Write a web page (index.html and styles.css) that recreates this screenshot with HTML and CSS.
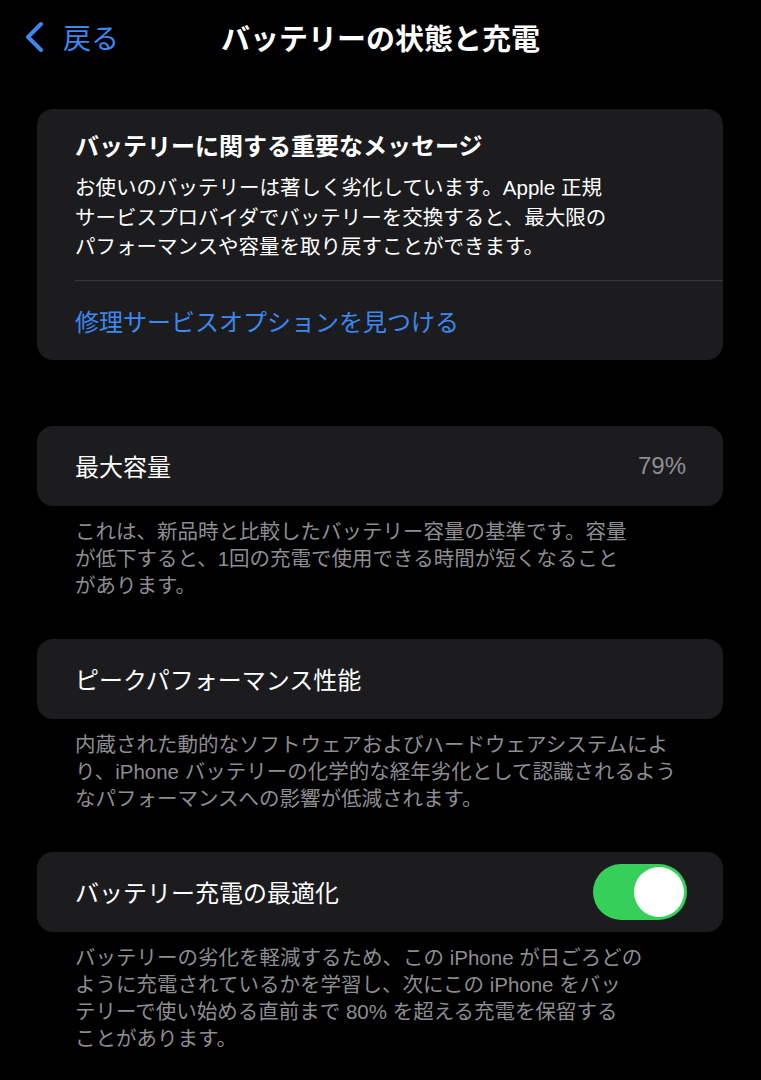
FILE: index.html
```html
<!DOCTYPE html>
<html lang="ja">
<head>
<meta charset="utf-8">
<link rel="stylesheet" href="styles.css">
</head>
<body>
<header class="nav">
  <div class="back">
    <svg class="chev" width="22" height="32" viewBox="0 0 22 32"><path d="M18 3 L5 16 L18 29" fill="none" stroke="#3c87f0" stroke-width="4" stroke-linecap="round" stroke-linejoin="round"/></svg>
    <span class="back-label">戻る</span>
  </div>
  <div class="nav-title">バッテリーの状態と充電</div>
  <div></div>
</header>
<main class="content">
  <section class="card msg">
    <div class="msg-title">バッテリーに関する重要なメッセージ</div>
    <p class="msg-body">お使いのバッテリーは著しく劣化しています。Apple 正規<br>サービスプロバイダでバッテリーを交換すると、最大限の<br>パフォーマンスや容量を取り戻すことができます。</p>
    <div class="sep"></div>
    <div class="link">修理サービスオプションを見つける</div>
  </section>

  <section class="card row first">
    <span class="label">最大容量</span>
    <span class="value">79%</span>
  </section>
  <p class="footer">これは、新品時と比較したバッテリー容量の基準です。容量<br>が低下すると、1回の充電で使用できる時間が短くなること<br>があります。</p>

  <section class="card row">
    <span class="label">ピークパフォーマンス性能</span>
  </section>
  <p class="footer">内蔵された動的なソフトウェアおよびハードウェアシステムによ<br>り、iPhone バッテリーの化学的な経年劣化として認識されるよう<br>なパフォーマンスへの影響が低減されます。</p>

  <section class="card row">
    <span class="label">バッテリー充電の最適化</span>
    <span class="toggle"><span class="knob"></span></span>
  </section>
  <p class="footer">バッテリーの劣化を軽減するため、この iPhone が日ごろどの<br>ように充電されているかを学習し、次にこの iPhone をバッ<br>テリーで使い始める直前まで 80% を超える充電を保留する<br>ことがあります。</p>
</main>
</body>
</html>
```

FILE: styles.css
```css
html, body {
  margin: 0;
  padding: 0;
  background: #000;
}
body {
  font-family: "Noto Sans CJK JP", "Noto Sans", sans-serif;
  color: #fff;
  width: 761px;
}
.nav {
  display: grid;
  grid-template-columns: 1fr auto 1fr;
  align-items: center;
  height: 74px;
}
.back {
  display: flex;
  align-items: center;
  padding-left: 23px;
  color: #3c87f0;
}
.chev {
  display: block;
}
.back-label {
  font-size: 28px;
  margin-left: 18px;
  line-height: 1;
}
.nav-title {
  font-size: 29px;
  font-weight: 700;
  line-height: 1;
}
.content {
  padding: 35px 38px 0 37px;
}
.card {
  background: #1c1c1e;
  border-radius: 16px;
}
.msg {
  padding: 19px 0 22px 38px;
}
.msg-title {
  font-size: 24px;
  font-weight: 700;
  line-height: 34px;
}
.msg-body {
  margin: 11px 0 0;
  font-family: "Liberation Sans", "Noto Sans CJK JP", sans-serif;
  font-size: 20.5px;
  line-height: 29.5px;
  padding-right: 38px;
}
.sep {
  height: 1px;
  background: #38383a;
  margin-top: 18px;
}
.link {
  margin-top: 23px;
  font-size: 24px;
  line-height: 34px;
  color: #3c87f0;
}
.row {
  display: flex;
  align-items: center;
  justify-content: space-between;
  height: 80px;
  padding: 0 37px 0 38px;
  margin-top: 40px;
}
.row.first {
  margin-top: 66px;
}
.label {
  font-size: 24px;
  line-height: 34px;
}
.value {
  font-family: "Liberation Sans", sans-serif;
  font-size: 24px;
  color: #8e8e93;
}
.footer {
  margin: 12px 0 0;
  padding-left: 38px;
  font-family: "Liberation Sans", "Noto Sans CJK JP", sans-serif;
  font-size: 20.5px;
  line-height: 27px;
  color: #8d8d92;
  white-space: nowrap;
}
.toggle {
  position: relative;
  width: 94px;
  height: 56px;
  border-radius: 28px;
  background: #36cf5a;
  margin-right: -1px;
}
.knob {
  position: absolute;
  right: 3px;
  top: 3px;
  width: 50px;
  height: 50px;
  border-radius: 50%;
  background: #fff;
}
```
